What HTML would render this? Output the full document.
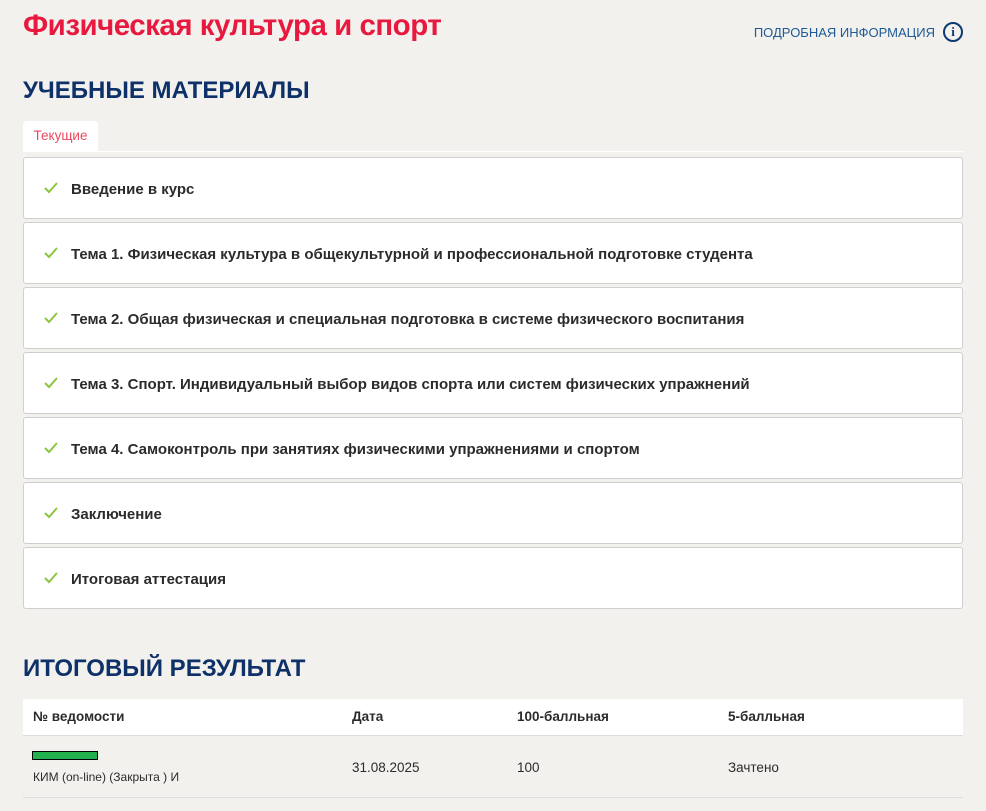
<!DOCTYPE html><html><head><meta charset="utf-8"><style>
body{margin:0;background:#f2f1ee;font-family:"Liberation Sans","DejaVu Sans",sans-serif;width:986px;height:811px;overflow:hidden;position:relative}
h1{position:absolute;left:23px;top:9px;margin:0;font-size:29.5px;font-weight:bold;color:#e8193f;letter-spacing:-0.5px}
.info{position:absolute;right:23px;top:22px;color:#1e5a96;font-size:13px;display:flex;align-items:center;gap:8px}
.ic{width:16px;height:16px;border:2px solid #0b3a72;border-radius:50%;color:#0b3a72;font-weight:bold;font-size:13px;text-align:center;line-height:16px;font-family:"Liberation Serif",serif}
h2{position:absolute;left:23px;margin:0;font-size:24px;font-weight:bold;color:#0d3168}
.tab{position:absolute;left:23px;top:121px;width:75px;height:30px;background:#fff;border-radius:4px 4px 0 0;color:#ea4a60;font-size:13.5px;line-height:30px;text-align:center}
.line{position:absolute;left:23px;top:151px;width:940px;height:1px;background:#fff}
.it{position:absolute;left:23px;width:938px;height:60px;background:#fff;border:1px solid #cfcfcf;border-radius:3px;font-size:15px;font-weight:bold;color:#2b2b2b;line-height:63px}
.it svg{position:absolute;left:20px;top:24px}
.it span{position:absolute;left:47px}
.th{position:absolute;left:23px;top:699px;width:940px;height:36px;background:#fff;border-bottom:1px solid #ddd;font-size:13.5px;font-weight:bold;color:#2b2b2b}
.th div,.tr div{position:absolute}
.tr{position:absolute;left:23px;top:736px;width:940px;height:61px;border-bottom:1px solid #ddd;font-size:13.5px;color:#2b2b2b}
</style></head><body>
<h1>Физическая культура и спорт</h1>
<div class="info">ПОДРОБНАЯ ИНФОРМАЦИЯ <div class="ic">i</div></div>
<h2 style="top:77px">УЧЕБНЫЕ МАТЕРИАЛЫ</h2>
<div class="tab">Текущие</div><div class="line"></div>
<div class="it" style="top:157px"><svg width="14" height="12"><path d="M1 6l4 4 8-9" stroke="#8cc63f" stroke-width="2" fill="none"/></svg><span>Введение в курс</span></div>
<div class="it" style="top:222px"><svg width="14" height="12"><path d="M1 6l4 4 8-9" stroke="#8cc63f" stroke-width="2" fill="none"/></svg><span>Тема 1. Физическая культура в общекультурной и профессиональной подготовке студента</span></div>
<div class="it" style="top:287px"><svg width="14" height="12"><path d="M1 6l4 4 8-9" stroke="#8cc63f" stroke-width="2" fill="none"/></svg><span>Тема 2. Общая физическая и специальная подготовка в системе физического воспитания</span></div>
<div class="it" style="top:352px"><svg width="14" height="12"><path d="M1 6l4 4 8-9" stroke="#8cc63f" stroke-width="2" fill="none"/></svg><span>Тема 3. Спорт. Индивидуальный выбор видов спорта или систем физических упражнений</span></div>
<div class="it" style="top:417px"><svg width="14" height="12"><path d="M1 6l4 4 8-9" stroke="#8cc63f" stroke-width="2" fill="none"/></svg><span>Тема 4. Самоконтроль при занятиях физическими упражнениями и спортом</span></div>
<div class="it" style="top:482px"><svg width="14" height="12"><path d="M1 6l4 4 8-9" stroke="#8cc63f" stroke-width="2" fill="none"/></svg><span>Заключение</span></div>
<div class="it" style="top:547px"><svg width="14" height="12"><path d="M1 6l4 4 8-9" stroke="#8cc63f" stroke-width="2" fill="none"/></svg><span>Итоговая аттестация</span></div>
<h2 style="top:655px">ИТОГОВЫЙ РЕЗУЛЬТАТ</h2>
<div class="th"><div style="left:10px;top:10px">№ ведомости</div><div style="left:329px;top:10px">Дата</div><div style="left:494px;top:10px">100-балльная</div><div style="left:705px;top:10px">5-балльная</div></div>
<div class="tr"><div style="left:9px;top:15px;width:64px;height:7px;background:#22b14c;border:1px solid #000"></div><div style="left:10px;top:34px;font-size:12px">КИМ (on-line) (Закрыта ) И</div><div style="left:329px;top:24px">31.08.2025</div><div style="left:494px;top:24px">100</div><div style="left:705px;top:24px">Зачтено</div></div>
</body></html>
